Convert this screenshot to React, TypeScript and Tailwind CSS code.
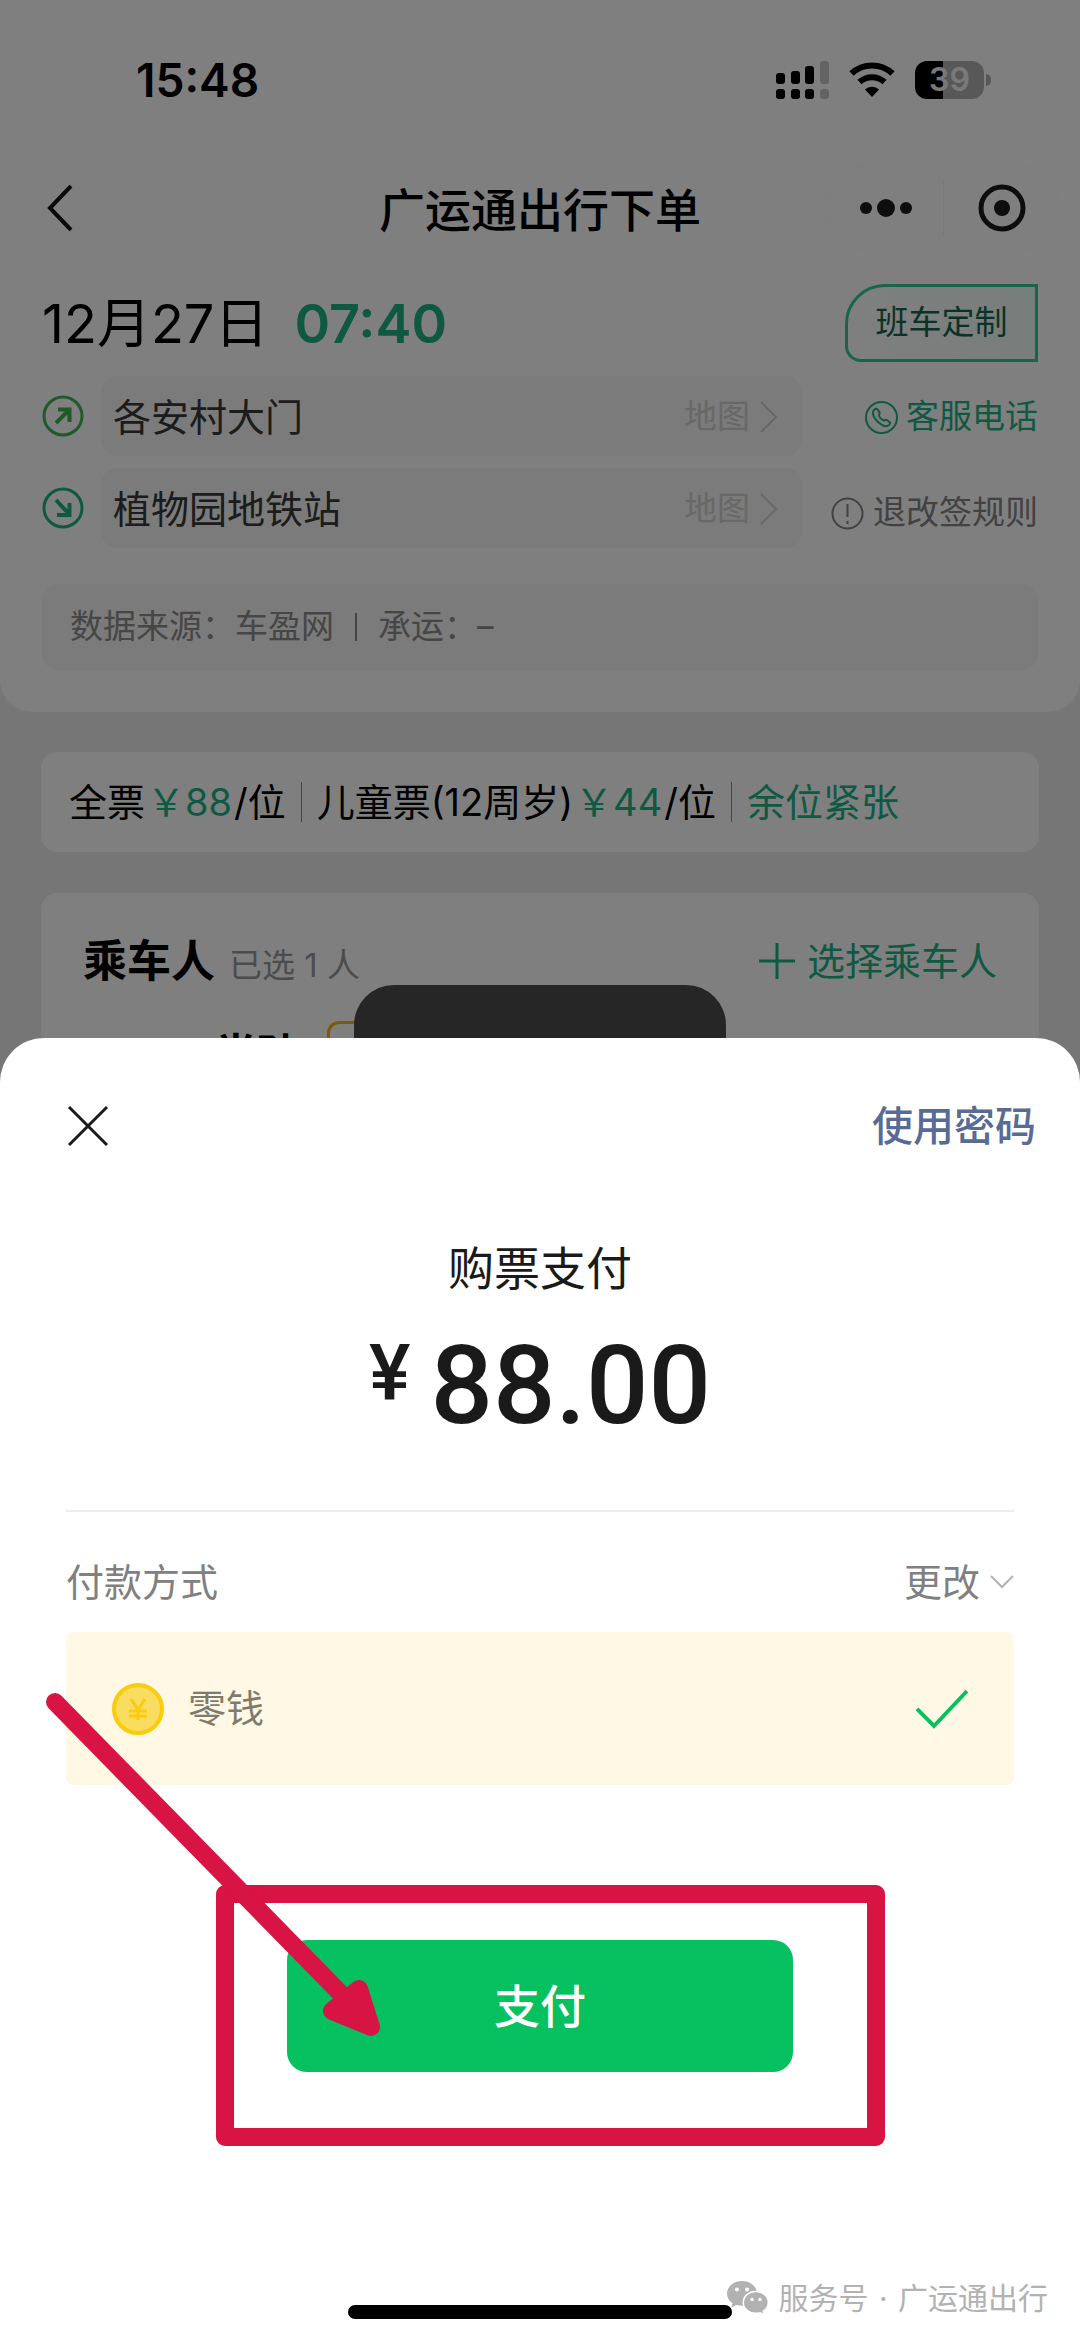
import type { ReactNode } from 'react';

function SignalIcon() {
  return (
    <svg className="h-[38px] w-[53px]" viewBox="0 0 53 38" aria-hidden="true">
      <rect x="0" y="12" width="9" height="11" rx="3" />
      <rect x="15" y="10" width="9" height="13" rx="3" />
      <rect x="29" y="5" width="9" height="18" rx="3" />
      <rect x="44" y="0" width="9" height="23" rx="3" fillOpacity="0.22" />
      <rect x="0" y="28" width="9" height="10" rx="3" />
      <rect x="15" y="28" width="9" height="10" rx="3" />
      <rect x="29" y="28" width="9" height="10" rx="3" />
      <rect x="44" y="28" width="9" height="10" rx="3" fillOpacity="0.22" />
    </svg>
  );
}

function WifiIcon() {
  return (
    <svg className="h-[36px] w-[46px]" viewBox="0 0 46 36" fill="none" aria-hidden="true">
      <path d="M2.5 11.5a30 30 0 0 1 41 0" stroke="#000" strokeWidth="6" />
      <path d="M10.5 20a18.5 18.5 0 0 1 25 0" stroke="#000" strokeWidth="6" />
      <path d="M16 27.5a10.5 10.5 0 0 1 14 0L23 35z" fill="#000" />
    </svg>
  );
}

function Battery() {
  return (
    <div className="flex items-center gap-[2px]">
      <div className="flex h-[38px] w-[69px] items-center justify-center rounded-xl bg-linear-to-r from-black from-40% to-[#b0b0b0] to-40% text-[32px] font-semibold text-[#f2f2f2]">
        39
      </div>
      <div className="h-3 w-[5px] rounded-r-full bg-[#b0b0b0]" />
    </div>
  );
}

function DirectionIcon({ d, className }: { d: string; className: string }) {
  return (
    <svg className={className} viewBox="0 0 42 42" fill="none" stroke="currentColor" aria-hidden="true">
      <circle cx="21" cy="21" r="19" strokeWidth="3" />
      <path d={d} strokeWidth="4" />
    </svg>
  );
}

function Chevron() {
  return (
    <svg className="h-[32px] w-[18px]" viewBox="0 0 18 32" fill="none" stroke="currentColor" strokeWidth="2" aria-hidden="true">
      <path d="M1 1l15 15L1 31" />
    </svg>
  );
}

function StopRow({ name, icon }: { name: string; icon: ReactNode }) {
  return (
    <div className="flex items-center gap-[17px]">
      {icon}
      <button
        type="button"
        className="flex h-20 flex-1 items-center justify-between rounded-2xl bg-[#f6f6f6] pt-[2px] pr-6 pl-3"
      >
        <span className="text-[38px] text-[#383838]">{name}</span>
        <span className="flex items-center gap-[10px] text-[33px] text-[#d0d0d0]">
          地图
          <Chevron />
        </span>
      </button>
    </div>
  );
}

function OrderPage() {
  return (
    <div className="relative bg-[#ececec] pb-3">
      <div className="rounded-b-[32px] bg-white pb-[42px]">
        <div className="flex h-40 items-center justify-between pr-[89px] pl-[136px]">
          <span className="text-[46px] font-semibold">15:48</span>
          <div className="flex items-center gap-5">
            <SignalIcon />
            <WifiIcon />
            <Battery />
          </div>
        </div>

        <header className="grid h-24 grid-cols-[1fr_auto_1fr] items-center px-5">
          <button type="button" aria-label="返回" className="w-14 pl-[26px]">
            <svg className="h-[46px] w-[28px]" viewBox="0 0 28 46" fill="none" stroke="#111" strokeWidth="4">
              <path d="M25 1L4 23l21 22" />
            </svg>
          </button>
          <h1 className="pt-1 text-[46px] font-medium">广运通出行下单</h1>
          <div className="flex h-[86px] w-[233px] items-center justify-self-end rounded-full border border-[#fafafa]">
            <button type="button" aria-label="更多" className="flex flex-1 justify-center">
              <svg className="h-[20px] w-[52px]" viewBox="0 0 52 20" fill="#1a1a1a">
                <circle cx="6" cy="10" r="6" />
                <circle cx="26" cy="10" r="9" />
                <circle cx="46" cy="10" r="6" />
              </svg>
            </button>
            <div className="h-14 w-px bg-[#f0f0f0]" />
            <button type="button" aria-label="关闭" className="flex flex-1 justify-center">
              <svg className="h-[48px] w-[48px]" viewBox="0 0 48 48" fill="none">
                <circle cx="24" cy="24" r="21" stroke="#1a1a1a" strokeWidth="5" />
                <circle cx="24" cy="24" r="8" fill="#1a1a1a" />
              </svg>
            </button>
          </div>
        </header>

        <div className="px-[42px]">
          <div className="flex items-center justify-between pt-7">
            <p className="flex items-center gap-[26px] pt-[2px] text-[54px] leading-[64px]">
              <span>12月27日</span>
              <span className="font-semibold text-[#1eb386]">07:40</span>
            </p>
            <span className="flex h-[78px] w-[193px] items-center justify-center rounded-tl-[40px] rounded-bl-2xl border-3 border-[#32c898] bg-linear-to-r from-white to-[#f0fcf8] text-[33px] text-[#146650]">
              班车定制
            </span>
          </div>

          <div className="mt-[14px] flex justify-between">
            <div className="flex w-[760px] flex-col gap-3">
              <StopRow
                name="各安村大门"
                icon={<DirectionIcon className="size-[42px] text-[#3fb451]" d="M14 28L27 15M16 14.500H27.500V27" />}
              />
              <StopRow
                name="植物园地铁站"
                icon={<DirectionIcon className="size-[42px] text-[#1eb386]" d="M14 13L27 27M15 28H27.500V16" />}
              />
            </div>
            <div className="flex flex-col items-end gap-4 text-[33px]">
              <a href="#service" className="flex h-20 items-center gap-2 pt-[2px] text-[#1eb386]">
                <svg className="size-[33px]" viewBox="0 0 33 33" fill="none" stroke="currentColor" strokeWidth="2" aria-hidden="true">
                  <circle cx="16.500" cy="16.500" r="15.500" />
                  <path d="M9.500 8.500c-3 2.500-1.500 7.500 2.500 11.500s9 6.500 12 4c1.500-1.500 1.500-2.500 0-3.500l-2-1.500c-1.500-1-2.500 1-3.500.5-2-1-4-3-4.500-4.500-.3-1 1-2 .5-3.500l-1.500-2.500c-1-1.500-2.500-1.500-3.500-.5z" />
                </svg>
                客服电话
              </a>
              <a href="#rules" className="flex h-20 items-center gap-[9px] pt-[2px] text-[#848484]">
                <svg className="size-[33px]" viewBox="0 0 33 33" fill="none" stroke="currentColor" strokeWidth="2" aria-hidden="true">
                  <circle cx="16.500" cy="16.500" r="15" />
                  <path d="M16.500 7v13M16.500 24v3" />
                </svg>
                退改签规则
              </a>
            </div>
          </div>

          <p className="mt-8 flex h-[86px] items-center rounded-2xl bg-[#f6f6f6] px-7 text-[33px] text-[#8c8c8c]">
            <span>数据来源：车盈网</span>
            <span className="mx-[21px] h-7 w-[2px] bg-[#8c8c8c]" />
            <span>承运：–</span>
          </p>
        </div>
      </div>

      <section className="mx-[41px] mt-10 flex h-[100px] items-center rounded-2xl bg-white px-[28px] text-[38px] whitespace-nowrap">
        <span>
          全票<span className="mx-[2px] text-[#1eb386]">￥88</span>/位
        </span>
        <span className="mx-[15px] h-10 w-px bg-[#888]" />
        <span>
          儿童票(12周岁)<span className="mx-[2px] text-[#1eb386]">￥44</span>/位
        </span>
        <span className="mx-[15px] h-10 w-px bg-[#888]" />
        <span className="text-[#1eb386]">余位紧张</span>
      </section>

      <section className="mx-[41px] mt-[41px] rounded-t-2xl bg-white px-[42px] pt-10">
        <div className="flex h-14 items-center justify-between">
          <div className="flex items-baseline gap-[14px]">
            <h2 className="text-[44px] font-bold">乘车人</h2>
            <span className="text-[33px] text-[#999]">已选 1 人</span>
          </div>
          <button type="button" className="flex items-center gap-3 text-[38px] text-[#1eb386]">
            <svg className="size-[36px]" viewBox="0 0 36 36" stroke="currentColor" strokeWidth="3" aria-hidden="true">
              <path d="M18 0v36M0 18h36" />
            </svg>
            选择乘车人
          </button>
        </div>
        <div className="mt-8 flex h-14 items-center gap-7 pl-[132px]">
          <span className="pt-2 text-[42px] font-bold">半孙</span>
          <span className="h-14 w-28 rounded-xl border-3 border-[#ffb314]" />
        </div>
      </section>

      {/* loading toast, mostly under the sheet */}
      <div className="absolute bottom-0 left-1/2 h-[104px] w-[372px] -translate-x-1/2 rounded-t-[40px] bg-[#4c4c4c]" />
      <div className="absolute inset-0 bg-black/50" />
    </div>
  );
}

function CoinIcon() {
  return (
    <svg className="size-[52px]" viewBox="0 0 52 52" fill="none" aria-hidden="true">
      <circle cx="26" cy="26" r="24" fill="#fadc5f" stroke="#f8cc0f" strokeWidth="4" />
      <path d="M19 16l7 11 7-11M17 28h18M17 33h18M26 27v10" stroke="#f8cc0f" strokeWidth="3" />
    </svg>
  );
}

function WechatLogo() {
  return (
    <svg className="h-[34px] w-[42px]" viewBox="0 0 42 34" aria-hidden="true">
      <path
        fill="#b2b2b2"
        d="M15 0C6.500 0 0 5.500 0 12.500c0 4 2 7.300 5.500 9.700L4.500 26.500l5-2.600c1.700.5 3.500.8 5.500.8C23 24.700 30 19.500 30 12.500S23.500 0 15 0z"
      />
      <path
        fill="#b2b2b2"
        stroke="#fff"
        strokeWidth="1.500"
        d="M29 10.500c-7 0-12.700 4.800-12.700 11S22 32.300 29 32.300c1.500 0 3-.2 4.300-.6l4 2-1-3.600c3.300-2 5-5.100 5-8.600 0-6.200-5.300-11-12.300-11z"
      />
      <g fill="#fff">
        <circle cx="10" cy="8.500" r="2" />
        <circle cx="20" cy="8.500" r="2" />
        <circle cx="25" cy="18.500" r="1.700" />
        <circle cx="33" cy="18.500" r="1.700" />
      </g>
    </svg>
  );
}

/* hand-drawn frame and arrow pointing at the pay button */
function PayHint() {
  return (
    <svg
      className="pointer-events-none absolute -top-[260px] left-1/2 h-[480px] w-[1080px] -translate-x-1/2"
      viewBox="0 1680 1080 480"
      fill="none"
      stroke="#d81444"
      strokeWidth="18"
      strokeLinecap="round"
      strokeLinejoin="round"
      aria-hidden="true"
    >
      <rect x="225" y="1894" width="651" height="243" />
      <path d="M55 1702L345 1998" />
      <path d="M359 1989L371 2027L332 2011Z" fill="#d81444" />
    </svg>
  );
}

function PaySheet() {
  return (
    <section className="relative -mt-[51px] flex flex-1 flex-col overflow-hidden rounded-t-[44px] bg-white px-[66px] pt-[58px] pb-[22px] text-[#1a1a1a]">
      <div className="-mr-[22px] flex h-[60px] items-center justify-between">
        <button type="button" aria-label="关闭">
          <svg className="h-[42px] w-[44px]" viewBox="0 0 44 42" fill="none" stroke="#1a1a1a" strokeWidth="3">
            <path d="M3 2l38 38M41 2L3 40" />
          </svg>
        </button>
        <button type="button" className="pt-[2px] text-[41px] font-medium text-[#576b95]">
          使用密码
        </button>
      </div>

      <h2 className="mt-[82px] text-center text-[46px] leading-[60px]">购票支付</h2>
      <p className="mt-8 flex h-[112px] items-start justify-center gap-5 font-['Roboto',sans-serif] font-medium">
        <span className="pt-1 text-[78px] leading-none">¥</span>
        <span className="text-[110px] leading-[112px]">88.00</span>
      </p>

      <div className="mt-[68px] flex items-center justify-between border-t-2 border-[#eee] pt-10 text-[38px] leading-[60px] text-[#808080]">
        <span>付款方式</span>
        <button type="button" className="flex items-center gap-[10px]">
          更改
          <svg className="h-[14px] w-[24px]" viewBox="0 0 24 14" fill="none" stroke="#b2b2b2" strokeWidth="2" aria-hidden="true">
            <path d="M1 1l11 11L23 1" />
          </svg>
        </button>
      </div>

      <label className="mt-5 flex h-[153px] items-center gap-6 rounded-lg bg-[#fff8e5] px-[46px] text-[38px] text-[#7f7b6c]">
        <CoinIcon />
        <span className="flex-1">零钱</span>
        <input type="radio" name="method" defaultChecked className="peer sr-only" />
        <svg className="h-[40px] w-[52px]" viewBox="0 0 52 40" fill="none" stroke="#07c160" strokeWidth="4" aria-hidden="true">
          <path d="M1 20l17 17L51 2" />
        </svg>
      </label>

      <div className="relative mt-[155px] flex justify-center">
        <button
          type="button"
          className="h-[132px] w-[506px] rounded-[20px] bg-[#07c160] text-[46px] font-medium text-white"
        >
          支付
        </button>
        <PayHint />
      </div>

      <div className="mx-auto mt-auto h-[14px] w-[384px] rounded-full bg-black" />
      <p className="absolute right-8 bottom-[22px] flex items-center gap-[9px] text-[30px] leading-[42px] text-[#b2b2b2]">
        <WechatLogo />
        <span>
          服务号 <span className="mx-[2px]">·</span> 广运通出行
        </span>
      </p>
    </section>
  );
}

export default function App() {
  return (
    <main className="flex min-h-screen flex-col overflow-hidden bg-white font-['Inter','Noto_Sans_CJK_SC',sans-serif] text-black">
      <OrderPage />
      <PaySheet />
    </main>
  );
}
